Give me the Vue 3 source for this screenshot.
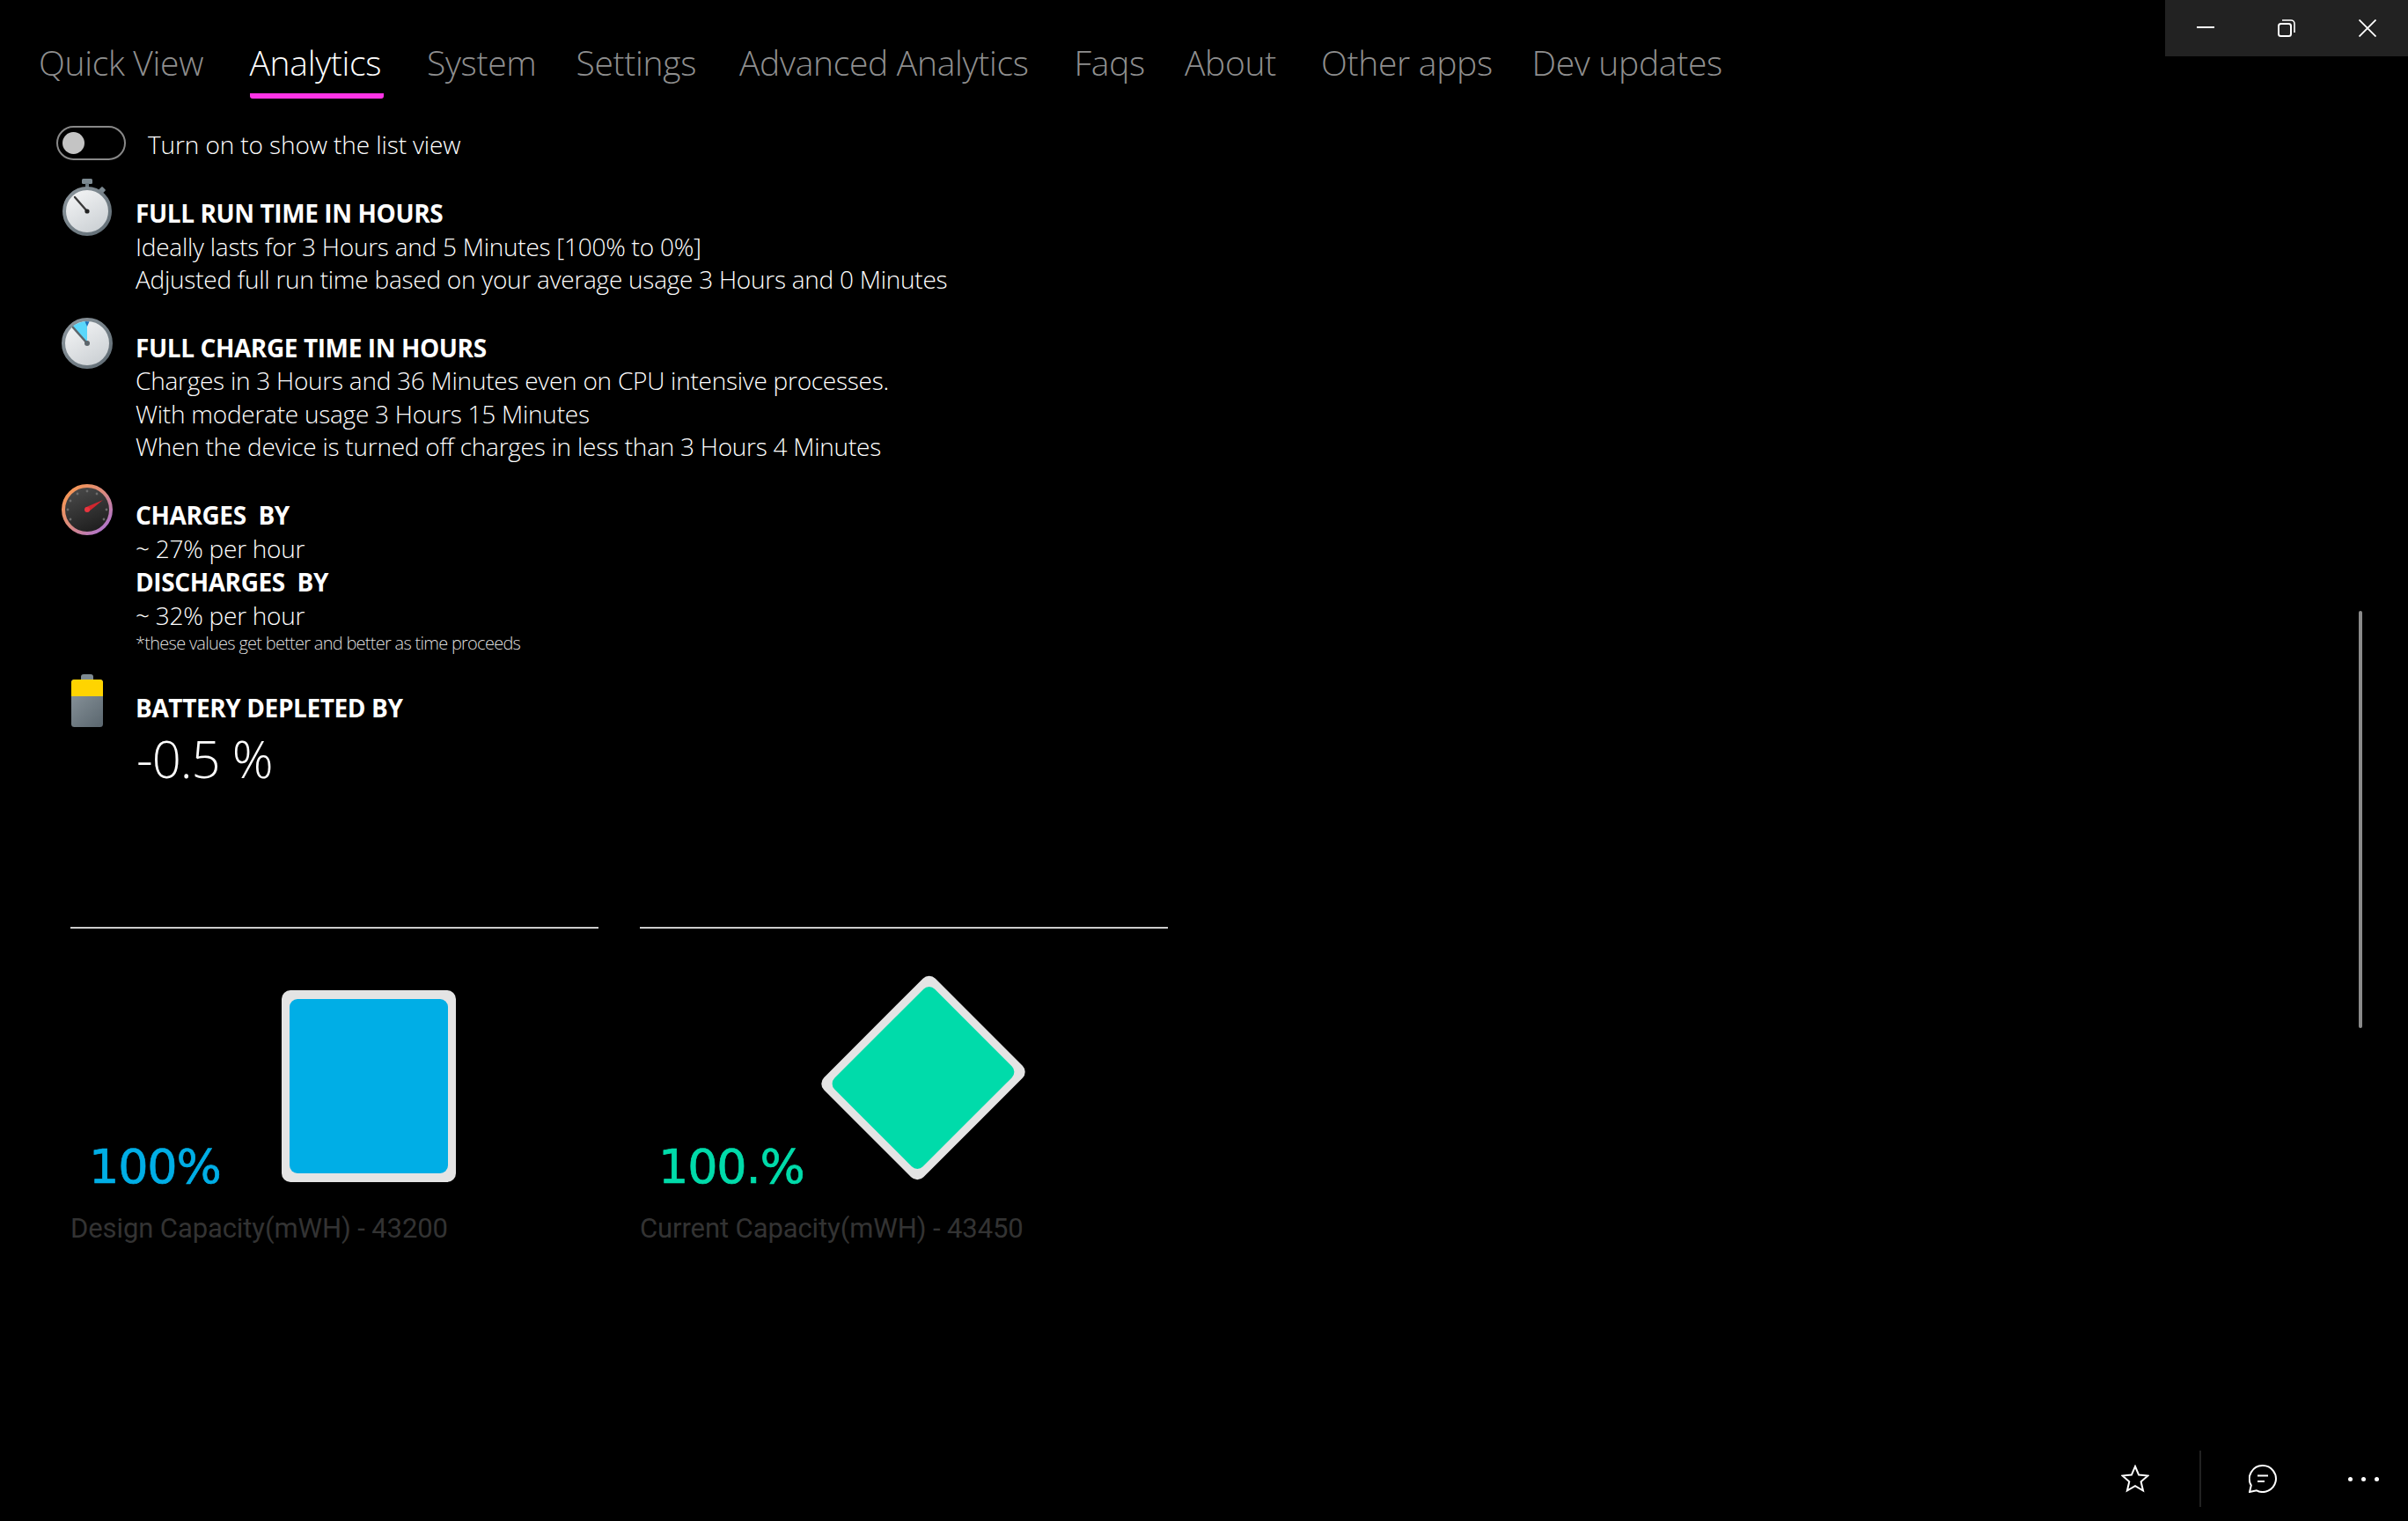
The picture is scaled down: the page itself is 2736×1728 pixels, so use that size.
<script setup>
const tabs = [
  { label: 'Quick View', width: 190 },
  { label: 'Analytics', width: 152, active: true },
  { label: 'System', width: 120 },
  { label: 'Settings', width: 136 },
  { label: 'Advanced Analytics', width: 331 },
  { label: 'Faqs', width: 76 },
  { label: 'About', width: 105.5 },
  { label: 'Other apps', width: 190 },
  { label: 'Dev updates', width: 214 },
]
</script>

<template>
  <div class="app">
    <div class="winctl">
      <svg class="ctl" viewBox="0 0 20 20" width="20" height="20"><path d="M0 9h20" stroke="#fff" stroke-width="2" fill="none"/></svg>
      <svg class="ctl" viewBox="0 0 20 20" width="20" height="20"><rect x="1" y="5" width="14" height="14" rx="2.5" stroke="#fff" stroke-width="2" fill="none"/><path d="M5 1h10a4 4 0 0 1 4 4v10" stroke="#fff" stroke-width="1.6" fill="none"/></svg>
      <svg class="ctl" viewBox="0 0 20 20" width="20" height="20"><path d="M0.5 0.5l19 19M19.5 0.5l-19 19" stroke="#fff" stroke-width="1.8" fill="none"/></svg>
    </div>

    <nav class="tabs">
      <div v-for="t in tabs" :key="t.label" class="tab" :class="{ active: t.active }" :style="{ width: t.width + 'px' }">{{ t.label }}</div>
    </nav>

    <div class="toggle-row">
      <div class="toggle"><span class="thumb"></span></div>
      <span class="toggle-label">Turn on to show the list view</span>
    </div>

    <section class="row r1">
      <svg class="icon" viewBox="0 0 72 72" width="72" height="72">
        <defs>
          <linearGradient id="face" x1="0.2" y1="0" x2="0.8" y2="1"><stop offset="0" stop-color="#f4f5f6"/><stop offset="1" stop-color="#c9ced2"/></linearGradient>
          <linearGradient id="rim" x1="0" y1="0" x2="1" y2="1"><stop offset="0" stop-color="#8d979e"/><stop offset="1" stop-color="#5f6b73"/></linearGradient>
        </defs>
        <rect x="29" y="0" width="12" height="6" rx="1.5" fill="#7d8a92"/>
        <rect x="33" y="5" width="4" height="5" fill="#6d7a82"/>
        <rect x="49" y="10" width="6" height="6" rx="1" transform="rotate(45 52 13)" fill="#7d8a92"/>
        <circle cx="35" cy="37" r="26" fill="url(#face)" stroke="url(#rim)" stroke-width="4"/>
        <path d="M21 21L35 37" stroke="#3a3a3a" stroke-width="2.4" stroke-linecap="round"/>
        <circle cx="35" cy="37" r="2.6" fill="#222"/>
      </svg>
      <div class="text">
        <div class="h">FULL RUN TIME IN HOURS</div>
        <div class="p">Ideally lasts for 3 Hours and 5 Minutes [100% to 0%]</div>
        <div class="p">Adjusted full run time based on your average usage 3 Hours and 0 Minutes</div>
      </div>
    </section>

    <section class="row r2">
      <svg class="icon" viewBox="0 0 72 72" width="72" height="72">
        <defs>
          <linearGradient id="face2" x1="0.2" y1="0" x2="0.8" y2="1"><stop offset="0" stop-color="#f4f5f6"/><stop offset="1" stop-color="#c9ced2"/></linearGradient>
          <linearGradient id="rim2" x1="0" y1="0" x2="1" y2="1"><stop offset="0" stop-color="#8d979e"/><stop offset="1" stop-color="#5f6b73"/></linearGradient>
        </defs>
        <circle cx="35" cy="29" r="27" fill="url(#face2)" stroke="url(#rim2)" stroke-width="4"/>
        <path d="M35 29V4A25 25 0 0 0 18 10.5Z" fill="#5ad7fb"/>
        <path d="M32.5 4.2h5L35 10Z" fill="#1f6fb5"/>
        <path d="M19 11L35 29" stroke="#5d666c" stroke-width="2.6" stroke-linecap="round"/>
        <circle cx="35" cy="29" r="3" fill="#5d666c"/>
      </svg>
      <div class="text">
        <div class="h">FULL CHARGE TIME IN HOURS</div>
        <div class="p">Charges in 3 Hours and 36 Minutes even on CPU intensive processes.</div>
        <div class="p">With moderate usage 3 Hours 15 Minutes</div>
        <div class="p">When the device is turned off charges in less than 3 Hours 4 Minutes</div>
      </div>
    </section>

    <section class="row r3">
      <svg class="icon" viewBox="0 0 72 72" width="72" height="72">
        <defs>
          <linearGradient id="ring" x1="0" y1="0" x2="1" y2="1"><stop offset="0" stop-color="#ff9a4a"/><stop offset="0.5" stop-color="#d98a80"/><stop offset="1" stop-color="#a56ee0"/></linearGradient>
          <linearGradient id="dial" x1="0.3" y1="0" x2="0.7" y2="1"><stop offset="0" stop-color="#4a4a4a"/><stop offset="1" stop-color="#1c1c1c"/></linearGradient>
        </defs>
        <circle cx="35" cy="29" r="27" fill="url(#dial)" stroke="url(#ring)" stroke-width="4"/>
        <g fill="#6a6a6a">
          <circle cx="35" cy="8" r="1.4"/><circle cx="24" cy="11" r="1.4"/><circle cx="46" cy="11" r="1.4"/>
          <circle cx="16" cy="19" r="1.4"/><circle cx="13" cy="29" r="1.4"/><circle cx="16" cy="40" r="1.4"/>
          <circle cx="57" cy="29" r="1.4"/><circle cx="54" cy="40" r="1.4"/>
        </g>
        <path d="M33 26.500L53 18L36.500 31.500Z" fill="#d0272f"/>
        <circle cx="35" cy="29" r="3" fill="#e8353f"/>
      </svg>
      <div class="text">
        <div class="h">CHARGES&nbsp; BY</div>
        <div class="p">~ 27% per hour</div>
        <div class="h">DISCHARGES&nbsp; BY</div>
        <div class="p">~ 32% per hour</div>
        <div class="note">*these values get better and better as time proceeds</div>
      </div>
    </section>

    <section class="row r4">
      <svg class="icon" viewBox="0 0 72 72" width="72" height="72">
        <defs>
          <linearGradient id="batt" x1="0.2" y1="0" x2="0.8" y2="1"><stop offset="0" stop-color="#8c979e"/><stop offset="1" stop-color="#5e6a72"/></linearGradient>
        </defs>
        <path d="M28 6V3a3 3 0 0 1 3-3h8a3 3 0 0 1 3 3v3Z" fill="#7d8a92"/>
        <rect x="17" y="6" width="36" height="54" rx="3.500" fill="url(#batt)"/>
        <path d="M17 25V9.500a3.500 3.500 0 0 1 3.500-3.500h29a3.500 3.500 0 0 1 3.500 3.500V25Z" fill="#ffd400"/>
      </svg>
      <div class="text">
        <div class="h">BATTERY DEPLETED BY</div>
        <div class="big">-0.5 %</div>
      </div>
    </section>

    <div class="cards">
      <div class="card">
        <div class="visual">
          <div class="pct blue">100%</div>
          <div class="rect"><div class="fill blue-bg"></div></div>
        </div>
        <div class="cap">Design Capacity(mWH) - 43200</div>
      </div>
      <div class="card">
        <div class="visual">
          <div class="pct green">100.%</div>
          <div class="rect diamond"><div class="fill green-bg"></div></div>
        </div>
        <div class="cap">Current Capacity(mWH) - 43450</div>
      </div>
    </div>

    <div class="scrollbar"></div>

    <div class="bottom">
      <svg viewBox="0 0 32 32" width="32" height="32" class="star"><path d="M16 2l4.100 9.600 10.400.9-7.900 6.800 2.400 10.200L16 24.100 6.900 29.500l2.400-10.200L1.500 12.500l10.400-.9Z" fill="none" stroke="#fff" stroke-width="2" stroke-linejoin="miter"/></svg>
      <div class="divider"></div>
      <svg viewBox="0 0 32 32" width="32" height="32" class="chat"><path d="M16 1a15 15 0 1 1-7 28.300L1 31l1.800-7.500A15 15 0 0 1 16 1Z" fill="none" stroke="#fff" stroke-width="2"/><path d="M10 12.500h12M10 19h8" stroke="#fff" stroke-width="2" fill="none"/></svg>
      <div class="dots"><span></span><span></span><span></span></div>
    </div>
  </div>
</template>

<style>
html, body { margin: 0; background: #000; }
</style>

<style scoped>
.app {
  position: relative;
  width: 2736px;
  height: 1728px;
  background: #000;
  color: #fff;
  overflow: hidden;
  font-family: "Open Sans", "Noto Sans", sans-serif;
}
.winctl {
  position: absolute;
  top: 0;
  right: 0;
  width: 276px;
  height: 64px;
  background: #222;
  display: flex;
  box-sizing: border-box;
  padding: 22px 36px 0;
  justify-content: space-between;
}
.ctl { display: block; }
.tabs {
  display: flex;
  gap: 49.5px;
  padding: 44px 0 0 44px;
  height: 68px;
}
.tab {
  height: 68px;
  box-sizing: border-box;
  font-size: 39px;
  font-weight: 300;
  line-height: 54px;
  letter-spacing: -0.3px;
  color: #8f8f8f;
  white-space: nowrap;
}
.tab.active {
  color: #fff;
  border-bottom: 6px solid #ff33e6;
  border-radius: 0 0 3px 3px;
}
.toggle-row {
  display: flex;
  align-items: center;
  margin: 30px 0 0 64px;
  height: 40px;
}
.toggle {
  width: 79px;
  height: 39px;
  box-sizing: border-box;
  border: 2px solid #888;
  border-radius: 20px;
  display: flex;
  align-items: center;
  padding-left: 5px;
}
.thumb {
  width: 25px;
  height: 25px;
  border-radius: 50%;
  background: #c4c4c4;
}
.toggle-label {
  margin-left: 25px;
  padding-top: 3px;
  font-size: 28px;
  font-weight: 300;
  letter-spacing: -0.1px;
}
.row {
  display: flex;
  margin-left: 64px;
}
.icon { flex: none; width: 72px; height: 72px; margin-right: 18px; }
.text { line-height: 37.5px; white-space: nowrap; }
.r1 { margin-top: 21px; }
.r1 .text { padding-top: 21px; }
.r2 { margin-top: 24px; }
.r2 .text { padding-top: 16px; }
.r3 { margin-top: 23px; }
.r3 .text { padding-top: 16px; line-height: 38px; }
.r4 { margin-top: 22px; }
.r4 .text { padding-top: 20px; }
.h { font-size: 28px; font-weight: 700; letter-spacing: -0.4px; }
.p { font-size: 28px; font-weight: 300; letter-spacing: -0.25px; }
.note { font-size: 20px; font-weight: 300; letter-spacing: -0.73px; line-height: 26px; color: #ddd; }
.big { font-size: 58px; font-weight: 300; line-height: 78px; letter-spacing: -1px; padding-left: 1px; }
.cards {
  position: absolute;
  left: 80px;
  top: 1053px;
  display: grid;
  grid-template-columns: 600px 600px;
  gap: 47px;
}
.card { border-top: 2px solid #ccc; }
.visual {
  display: flex;
  align-items: flex-end;
  height: 218px;
  margin-top: 70px;
}
.pct {
  flex: none;
  width: 219px;
  padding-left: 21px;
  font-family: "DejaVu Sans", sans-serif;
  font-size: 54px;
  line-height: 52px;
  letter-spacing: -1.2px;
  -webkit-text-stroke: 0.7px currentColor;
  margin-bottom: -9px;
}
.blue { color: #00aee6; }
.green { color: #00dbaa; }
.rect {
  flex: none;
  width: 198px;
  height: 218px;
  box-sizing: border-box;
  padding: 10px 9px;
  border-radius: 10px;
  background: #e4e4e4;
  display: flex;
}
.fill { flex: 1; border-radius: 9px; }
.blue-bg { background: #00aee6; }
.green-bg { background: #00dbaa; }
.diamond {
  align-self: flex-start;
  width: 160px;
  height: 179px;
  padding: 9px;
  margin-top: 10px;
  margin-left: 2px;
  transform: rotate(45deg);
}
.cap {
  margin-top: 36px;
  font-family: Roboto, sans-serif;
  font-size: 31px;
  line-height: 34px;
  letter-spacing: -0.1px;
  color: #333;
  white-space: nowrap;
}
.scrollbar {
  position: absolute;
  left: 2680px;
  top: 694px;
  width: 4px;
  height: 474px;
  border-radius: 2px;
  background: #8a8a8a;
}
.bottom {
  position: absolute;
  right: 0;
  bottom: 16px;
  width: 326px;
  height: 64px;
  display: flex;
  align-items: center;
}
.divider { width: 2px; height: 64px; background: #222; margin-left: 57px; }
.chat { margin-left: 54px; }
.dots { display: flex; gap: 10px; margin-left: 81px; }
.dots span { width: 5px; height: 5px; border-radius: 50%; background: #fff; }
</style>
